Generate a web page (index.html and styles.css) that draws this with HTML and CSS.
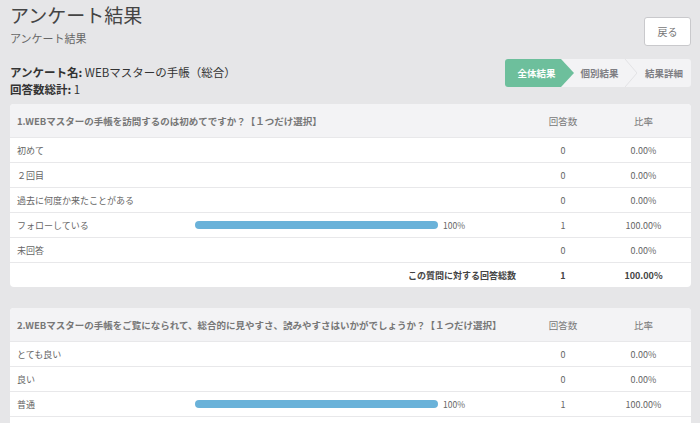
FILE: index.html
```html
<!DOCTYPE html>
<html lang="ja">
<head>
<meta charset="utf-8">
<title>アンケート結果</title>
<link rel="stylesheet" href="styles.css">
</head>
<body>
<div class="page">
  <div class="top">
    <div class="titles">
      <h1 class="title">アンケート結果</h1>
      <div class="subtitle">アンケート結果</div>
    </div>
    <button class="back">戻る</button>
  </div>
  <div class="info-row">
    <div class="info">
      <div><b>アンケート名:</b> WEBマスターの手帳（総合）</div>
      <div><b>回答数総計:</b> 1</div>
    </div>
    <div class="steps">
      <div class="step step-active">全体結果</div>
      <div class="step step-mid">個別結果</div>
      <svg class="sep" width="12" height="28" viewBox="0 0 12 28"><polyline points="0,0 12,14 0,28" fill="none" stroke="#e2e2e5" stroke-width="1"/></svg>
      <div class="step step-last">結果詳細</div>
    </div>
  </div>

  <div class="card">
    <div class="row head">
      <div class="q">1.WEBマスターの手帳を訪問するのは初めてですか？【１つだけ選択】</div>
      <div class="num">回答数</div>
      <div class="num">比率</div>
    </div>
    <div class="row"><div class="label">初めて</div><div class="barcell"></div><div class="num">0</div><div class="num">0.00%</div></div>
    <div class="row"><div class="label">２回目</div><div class="barcell"></div><div class="num">0</div><div class="num">0.00%</div></div>
    <div class="row"><div class="label">過去に何度か来たことがある</div><div class="barcell"></div><div class="num">0</div><div class="num">0.00%</div></div>
    <div class="row"><div class="label">フォローしている</div><div class="barcell"><div class="bar" style="width:243px"></div><span class="pct">100%</span></div><div class="num">1</div><div class="num">100.00%</div></div>
    <div class="row"><div class="label">未回答</div><div class="barcell"></div><div class="num">0</div><div class="num">0.00%</div></div>
    <div class="row total"><div class="total-label">この質問に対する回答総数</div><div class="num">1</div><div class="num">100.00%</div></div>
  </div>

  <div class="card">
    <div class="row head">
      <div class="q">2.WEBマスターの手帳をご覧になられて、総合的に見やすさ、読みやすさはいかがでしょうか？【１つだけ選択】</div>
      <div class="num">回答数</div>
      <div class="num">比率</div>
    </div>
    <div class="row"><div class="label">とても良い</div><div class="barcell"></div><div class="num">0</div><div class="num">0.00%</div></div>
    <div class="row"><div class="label">良い</div><div class="barcell"></div><div class="num">0</div><div class="num">0.00%</div></div>
    <div class="row"><div class="label">普通</div><div class="barcell"><div class="bar" style="width:243px"></div><span class="pct">100%</span></div><div class="num">1</div><div class="num">100.00%</div></div>
    <div class="row"></div>
  </div>
</div>
</body>
</html>
```

FILE: styles.css
```css
html, body {
  margin: 0;
  padding: 0;
  background: #e6e6e8;
}
body {
  font-family: "Noto Sans CJK JP", "Noto Sans", sans-serif;
  color: #444;
  overflow: hidden;
}
.page {
  padding: 4px 9px 0 10px;
}
.top {
  display: flex;
  justify-content: space-between;
  align-items: flex-start;
}
.title {
  margin: 0;
  font-size: 19px;
  font-weight: 400;
  line-height: 22px;
  color: #444;
}
.subtitle {
  margin-top: 5px;
  font-size: 11px;
  line-height: 14px;
  color: #666;
}
.back {
  margin-top: 13px;
  width: 47px;
  height: 29px;
  background: #fff;
  border: 1px solid #c9c9cc;
  border-radius: 3px;
  font-family: inherit;
  font-size: 10px;
  color: #777;
  padding: 0;
}
.info-row {
  margin-top: 13px;
  display: flex;
  justify-content: space-between;
  align-items: flex-start;
}
.info {
  margin-top: 5px;
  font-size: 11.5px;
  line-height: 17px;
  color: #333;
}
.info b {
  font-weight: 700;
}
.steps {
  display: flex;
  width: 186px;
  height: 28px;
  background: #f3f3f5;
  border-radius: 3px;
  overflow: hidden;
}
.step {
  display: flex;
  align-items: center;
  justify-content: center;
  font-size: 9.5px;
  font-weight: 700;
  color: #7e7e83;
}
.step-active {
  width: 69px;
  padding-right: 6px;
  box-sizing: border-box;
  background: #6dbf9c;
  color: #fff;
  clip-path: polygon(0 0, 56px 0, 69px 50%, 56px 100%, 0 100%);
}
.step-mid {
  width: 51px;
}
.sep {
  display: block;
  flex: none;
}
.step-last {
  width: 54px;
}
.card {
  margin-top: 6px;
  margin-bottom: 21px;
  background: #fff;
  border-radius: 4px;
  overflow: hidden;
}
.row {
  display: grid;
  grid-template-columns: 185px 335px 66px 1fr;
  align-items: center;
  height: 25px;
  box-sizing: border-box;
  border-top: 1px solid #e8e8ea;
  font-size: 9px;
  color: #666;
}
.row.head {
  grid-template-columns: 520px 66px 1fr;
  height: 33px;
  border-top: none;
  background: #f3f3f5;
  font-size: 9.5px;
  color: #777;
}
.q {
  padding-left: 7px;
  font-weight: 700;
  white-space: nowrap;
}
.label {
  padding-left: 7px;
  white-space: nowrap;
}
.num {
  text-align: center;
}
.barcell {
  display: flex;
  align-items: center;
  gap: 5px;
}
.bar {
  height: 8px;
  border-radius: 4px;
  background: #6ab2d9;
}
.pct {
  font-size: 8.5px;
  color: #666;
}
.row.total {
  grid-template-columns: 506px 80px 1fr;
  font-weight: 700;
  color: #444;
}
.total-label {
  text-align: right;
}
.total .num:nth-child(2) {
  padding-left: 14px;
  text-align: center;
}
```
